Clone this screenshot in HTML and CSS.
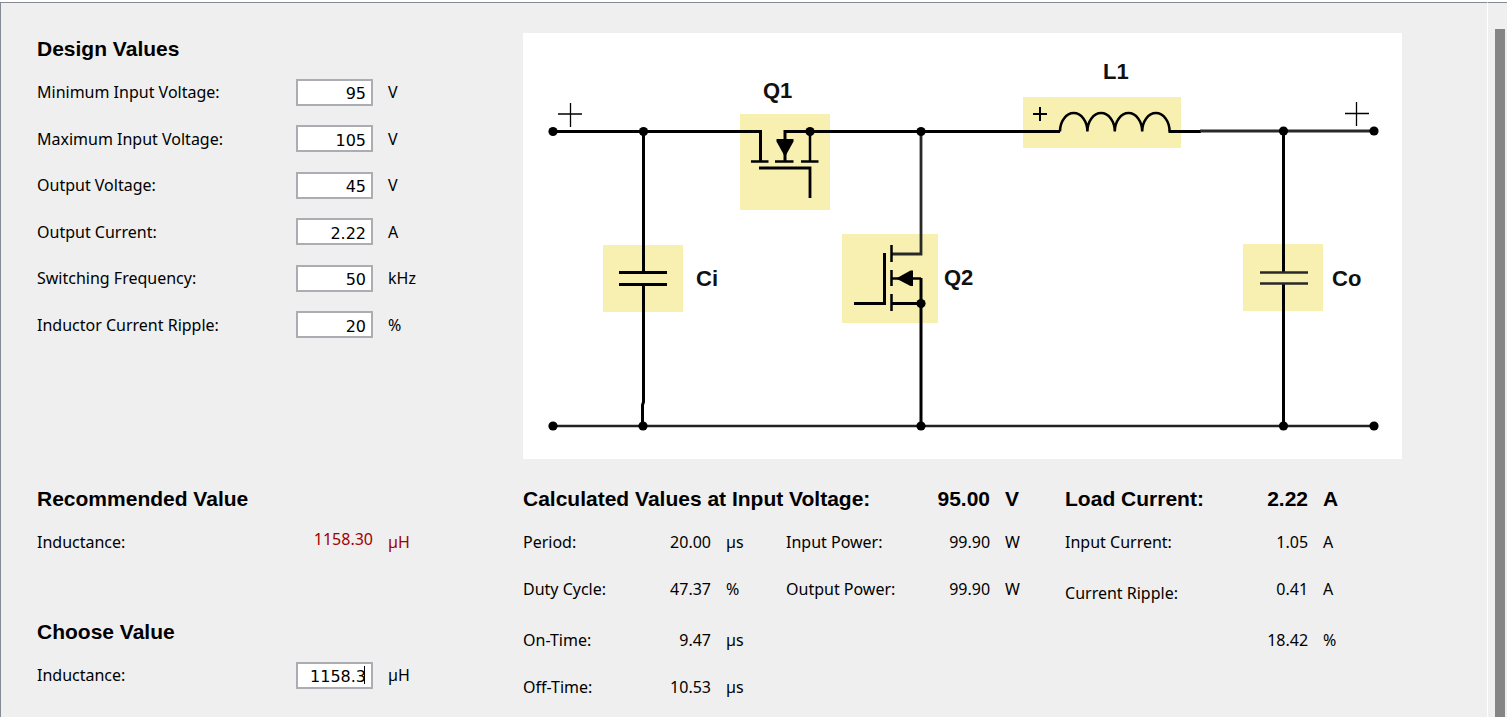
FILE: index.html
```html
<!DOCTYPE html>
<html lang="en">
<head>
<meta charset="utf-8">
<title>Buck Converter Design</title>
<link rel="stylesheet" href="styles.css">
</head>
<body>
<div class="window">
  <main class="sheet">
    <section class="group">
      <h2 class="title">Design Values</h2>
      <div class="fields">
        <label for="vin-min">Minimum Input Voltage:</label><input class="entry" id="vin-min" type="text" value="95"><span>V</span>
        <label for="vin-max">Maximum Input Voltage:</label><input class="entry" id="vin-max" type="text" value="105"><span>V</span>
        <label for="vout">Output Voltage:</label><input class="entry" id="vout" type="text" value="45"><span>V</span>
        <label for="iout">Output Current:</label><input class="entry" id="iout" type="text" value="2.22"><span>A</span>
        <label for="freq">Switching Frequency:</label><input class="entry" id="freq" type="text" value="50"><span>kHz</span>
        <label for="ripple">Inductor Current Ripple:</label><input class="entry" id="ripple" type="text" value="20"><span>%</span>
      </div>
    </section>

    <svg class="circuit" viewBox="523 33 879 426" role="img" aria-label="Synchronous buck converter schematic">
      <g class="part">
        <rect x="740" y="114" width="90" height="96"/>
        <rect x="603" y="245" width="80" height="67"/>
        <rect x="842" y="234" width="96" height="89"/>
        <rect x="1023" y="97" width="158" height="51"/>
        <rect x="1243" y="244" width="80" height="67"/>
      </g>
      <g class="wire">
        <path d="M552 131.5H760.500V161M785 161V131.500H1060"/>
        <path d="M810 131V161" stroke-width="2.500"/>
        <path d="M751 161.500H768.500M775 161.500H793.500M801 161.500H818.500" stroke-width="2.500"/>
        <path d="M759 168H810V198" stroke-width="2.800"/>
        <path d="M643.500 131V272.500M643.500 284.500V402L642.500 405V426M619 272.500H667M619 284.500H667"/>
        <path d="M921 131V254H891" stroke="#282828" stroke-width="2.800"/>
        <path d="M891.500 245V262M891.500 270V286M891.500 294V311M891 278.500H921" stroke-width="2.500"/>
        <path d="M884.500 253V303.500H854M891 303.500H921M921 278V426"/>
        <path d="M1060 131.500A13.700 18.500 0 0 1 1087.400 131.500A13.700 18.500 0 0 1 1114.800 131.500A13.700 18.500 0 0 1 1142.200 131.500A13.700 18.500 0 0 1 1169.600 131.500" stroke-width="2.500"/>
        <path d="M1168.500 131.500H1201"/>
        <path d="M1200 131H1374" stroke="#282828" stroke-width="3"/>
        <path d="M1283.500 131V272M1283.500 284V426"/>
        <path d="M1260 272.500H1308M1260 283.500H1308" stroke="#282828" stroke-width="2.500"/>
        <path d="M552 426H1374" stroke="#222" stroke-width="2.500"/>
        <path d="M558 114H582M570.500 103V127M1345 113.500H1369M1356.500 102V126" stroke-width="1.300"/>
        <path d="M1033 114H1047M1040 107V121" stroke-width="2"/>
      </g>
      <g class="node">
        <path d="M776.500 139H793.500V141.500L785.500 156H784.500L776.500 141.500Z"/>
        <path d="M913 270.500V286H910.500L897 279V278L910.500 270.500Z"/>
        <circle cx="553" cy="131.500" r="4.600"/><circle cx="643.500" cy="131.500" r="4.600"/>
        <circle cx="810" cy="131.500" r="4.600"/><circle cx="921" cy="131.500" r="4.600"/>
        <circle cx="1283.500" cy="131" r="4.600"/><circle cx="1374" cy="131" r="4.600"/>
        <circle cx="921" cy="303.500" r="4.600"/>
        <circle cx="553" cy="426" r="4.600"/><circle cx="643" cy="426" r="4.600"/>
        <circle cx="921" cy="426" r="4.600"/><circle cx="1283.500" cy="426" r="4.600"/>
        <circle cx="1374" cy="426" r="4.600"/>
      </g>
      <g class="name">
        <text x="763" y="98">Q1</text>
        <text x="1103" y="79">L1</text>
        <text x="696" y="286">Ci</text>
        <text x="944" y="285">Q2</text>
        <text x="1332" y="286">Co</text>
      </g>
    </svg>

    <div class="choices">
      <section class="group">
        <h2 class="title">Recommended Value</h2>
        <div class="fields">
          <span>Inductance:</span><output class="advice advice-value">1158.30</output><span class="advice">µH</span>
        </div>
      </section>
      <section class="group">
        <h2 class="title">Choose Value</h2>
        <div class="fields">
          <label for="inductance">Inductance:</label>
          <div class="editing"><input class="entry" id="inductance" type="text" value="1158.3"><i class="caret"></i></div>
          <span>µH</span>
        </div>
      </section>
    </div>

    <table class="results">
      <colgroup>
        <col class="c-name"><col class="c-value"><col class="c-unit">
        <col class="c-name"><col class="c-power"><col class="c-unit">
        <col class="c-load"><col class="c-value"><col>
      </colgroup>
      <thead>
        <tr>
          <th colspan="4">Calculated Values at Input Voltage:</th><th class="num">95.00</th><th class="unit">V</th>
          <th>Load Current:</th><th class="num">2.22</th><th class="unit">A</th>
        </tr>
      </thead>
      <tbody>
        <tr>
          <td>Period:</td><td class="num">20.00</td><td class="unit">µs</td>
          <td>Input Power:</td><td class="num">99.90</td><td class="unit">W</td>
          <td>Input Current:</td><td class="num">1.05</td><td class="unit">A</td>
        </tr>
        <tr class="tall">
          <td>Duty Cycle:</td><td class="num">47.37</td><td class="unit">%</td>
          <td>Output Power:</td><td class="num">99.90</td><td class="unit">W</td>
          <td class="low">Current Ripple:</td><td class="num">0.41</td><td class="unit">A</td>
        </tr>
        <tr>
          <td>On-Time:</td><td class="num">9.47</td><td class="unit">µs</td>
          <td></td><td></td><td></td>
          <td></td><td class="num">18.42</td><td class="unit">%</td>
        </tr>
        <tr>
          <td>Off-Time:</td><td class="num">10.53</td><td class="unit">µs</td>
          <td></td><td></td><td></td><td></td><td></td><td></td>
        </tr>
      </tbody>
    </table>
  </main>
  <div class="scrollbar"><div class="thumb"></div></div>
</div>
</body>
</html>
```
FILE: styles.css
```css
* { box-sizing: border-box; }

body {
  margin: 0;
  background: #fff;
  color: #000;
  font: 16px/24px "Noto Sans", sans-serif;
}

.window {
  display: flex;
  height: 100vh;
  padding-top: 2px;
  overflow: hidden;
}

.sheet {
  flex: 1;
  display: grid;
  grid-template-columns: 486px 1fr;
  grid-template-rows: max-content max-content;
  align-content: start;
  row-gap: 24px;
  padding: 30px 85px 0 36px;
  background: #efefef;
  border: solid #868a96;
  border-width: 1px 0 0 1px;
}

.title {
  margin: 0 0 4px;
  font: bold 21px/32px "Liberation Sans", Arial, sans-serif;
}

.fields {
  display: grid;
  grid-template-columns: 259px 77px 1fr;
  grid-auto-rows: 46px 47px;
  align-items: center;
}

.fields > :nth-child(3n) { padding-left: 15px; }

.entry {
  display: block;
  width: 100%;
  height: 27px;
  padding: 3px 5px 0;
  border: 2px solid #abadb3;
  border-radius: 0;
  outline: 0;
  background: #fff;
  color: #000;
  font: 16px/20px "DejaVu Sans", sans-serif;
  text-align: right;
}

.editing { position: relative; }

.caret {
  position: absolute;
  right: 8px;
  top: 4px;
  width: 1px;
  height: 18px;
  background: #000;
}

.advice { color: #a00000; }

.advice-value {
  padding-bottom: 6px;
  text-align: right;
}

.choices {
  display: flex;
  flex-direction: column;
  gap: 51px;
}

.circuit {
  display: block;
  width: 100%;
  height: auto;
  background: #fff;
}

.part { fill: #f8f0b0; }
.wire { fill: none; stroke: #000; stroke-width: 3; }
.node { fill: #000; }
.name { fill: #111; font: bold 22px "Liberation Sans", Arial, sans-serif; }

.results {
  width: 100%;
  align-self: start;
  table-layout: fixed;
  border-collapse: collapse;
}

.c-name { width: 128px; }
.c-value { width: 60px; }
.c-unit { width: 75px; }
.c-power { width: 76px; }
.c-load { width: 183px; }

.results th {
  padding: 0 0 15px;
  font: bold 21px/32px "Liberation Sans", Arial, sans-serif;
  text-align: left;
}

.results td {
  height: 47px;
  padding: 0 0 23px;
  vertical-align: top;
  white-space: nowrap;
}

.results .tall td { height: 51px; }
.results .low { vertical-align: bottom; }
.results .num { text-align: right; }
.results .unit { padding-left: 15px; }

.scrollbar {
  display: flex;
  justify-content: flex-end;
  width: 20px;
  padding: 26px 2px 0 0;
  background: #efefef;
  border-left: 1px solid #fff;
  border-top: 1px solid #868a96;
}

.thumb {
  width: 10px;
  background: #858585;
}
```
